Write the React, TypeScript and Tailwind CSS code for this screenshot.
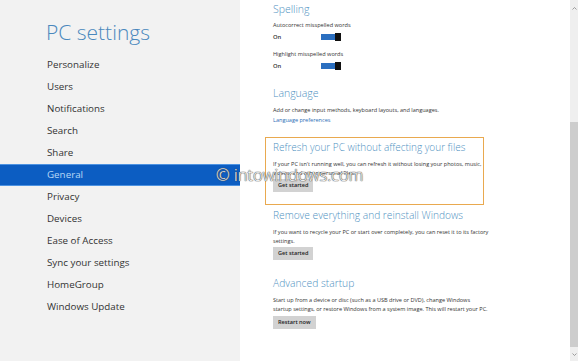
import React from 'react';

const navItems = [
  'Personalize',
  'Users',
  'Notifications',
  'Search',
  'Share',
  'General',
  'Privacy',
  'Devices',
  'Ease of Access',
  'Sync your settings',
  'HomeGroup',
  'Windows Update',
];

const Toggle: React.FC = () => (
  <div className="flex items-center">
    <div className="h-[6px] w-[14px] bg-[#2b6fc0]" />
    <div className="h-[8px] w-[6px] bg-[#111]" />
  </div>
);

const Button: React.FC<{ label: string }> = ({ label }) => (
  <div className="flex h-[13px] w-fit items-center bg-[#d2d2d2] px-[5px] text-[5.6px] font-semibold text-[#222]">
    {label}
  </div>
);

const App: React.FC = () => {
  return (
    <div
      className="relative flex h-[361px] w-[578px] overflow-hidden bg-white"
      style={{ fontFamily: '"Open Sans", "Noto Sans", sans-serif' }}
    >
      {/* left nav */}
      <div className="w-[240px] shrink-0 bg-[#f2f2f2]">
        <div className="pl-[46px] pt-[17px] text-[21px] font-light leading-[30px] text-[#4a88bd]">PC settings</div>
        <div className="mt-[7px] flex flex-col">
          {navItems.map((item) =>
            item === 'General' ? (
              <div
                key={item}
                className="flex h-[22px] items-center border-y border-[#4d93e2] bg-[#0c5dc2] pl-[47px] text-[9.8px] text-[#b8d8f6]"
              >
                {item}
              </div>
            ) : (
              <div key={item} className="flex h-[22px] items-center pl-[47px] text-[9.8px] text-[#333]">
                {item}
              </div>
            )
          )}
        </div>
      </div>

      {/* right content */}
      <div className="flex flex-1">
        <div className="flex-1 whitespace-nowrap pl-[33px] text-[#333]">
          <div className="mt-[2px] text-[10.5px] font-light leading-[14px] text-[#5092c2]">Spelling</div>
          <div className="mt-[5px] text-[5.6px] leading-[9px]">Autocorrect misspelled words</div>
          <div className="mt-[2px] flex h-[10px] items-center">
            <span className="w-[48px] text-[5.8px] font-semibold">On</span>
            <Toggle />
          </div>
          <div className="mt-[8px] text-[5.6px] leading-[9px]">Highlight misspelled words</div>
          <div className="mt-[2px] flex h-[10px] items-center">
            <span className="w-[48px] text-[5.8px] font-semibold">On</span>
            <Toggle />
          </div>

          <div className="mt-[15px] text-[10.5px] font-light leading-[14px] text-[#5092c2]">Language</div>
          <div className="mt-[6px] text-[5.55px] leading-[9px]">
            Add or change input methods, keyboard layouts, and languages.
          </div>
          <div className="mt-[1px] text-[5.55px] leading-[9px] text-[#2a6db5]">Language preferences</div>

          <div className="-ml-[8px] mt-[12px] w-[219px] border border-[#e9a94f] pb-[12px] pl-[7px] pr-[2px] pt-[2px]">
            <div className="text-[10px] font-light leading-[14px] text-[#5092c2]">
              Refresh your PC without affecting your files
            </div>
            <div className="mt-[6px] text-[5.55px] leading-[9px]">
              If your PC isn't running well, you can refresh it without losing your photos, music,
              <br />
              videos, and other personal files.
            </div>
            <div className="mt-[1px]">
              <Button label="Get started" />
            </div>
          </div>

          <div className="mt-[3px] text-[10.2px] font-light leading-[14px] text-[#5092c2]">
            Remove everything and reinstall Windows
          </div>
          <div className="mt-[6px] text-[5.55px] leading-[9px]">
            If you want to recycle your PC or start over completely, you can reset it to its factory
            <br />
            settings.
          </div>
          <div className="mt-[1px]">
            <Button label="Get started" />
          </div>

          <div className="mt-[16px] text-[10.3px] font-light leading-[14px] text-[#5092c2]">Advanced startup</div>
          <div className="mt-[6px] text-[5.55px] leading-[9px]">
            Start up from a device or disc (such as a USB drive or DVD), change Windows
            <br />
            startup settings, or restore Windows from a system image. This will restart your PC.
          </div>
          <div className="mt-[2px]">
            <Button label="Restart now" />
          </div>
        </div>

        {/* scrollbar */}
        <div className="flex w-[8px] flex-col bg-[#efefef]">
          <div className="flex h-[16px] items-center justify-center">
            <svg width="5" height="3" viewBox="0 0 5 3" fill="none" stroke="#888" strokeWidth="0.8">
              <path d="M0.5 2.5 L2.5 0.5 L4.5 2.5" />
            </svg>
          </div>
          <div className="mt-[106px] h-[225px] bg-[#cdcdcd]" />
          <div className="flex flex-1 items-center justify-center">
            <svg width="5" height="3" viewBox="0 0 5 3" fill="none" stroke="#888" strokeWidth="0.8">
              <path d="M0.5 0.5 L2.5 2.5 L4.5 0.5" />
            </svg>
          </div>
        </div>
      </div>

      {/* watermark */}
      <div className="pointer-events-none absolute left-[216px] top-[164px] text-[16.5px] font-light leading-[22px] text-[#f7f7f7] [text-shadow:0_0_1px_#555,0_0_1px_#555,0_0_1px_#555]">
        © intowindows.com
      </div>
    </div>
  );
};

export default App;
